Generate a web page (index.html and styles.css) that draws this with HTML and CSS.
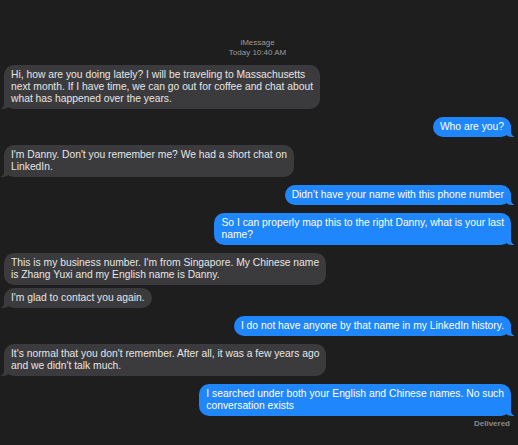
FILE: index.html
```html
<!DOCTYPE html>
<html>
<head>
<meta charset="utf-8">
<link rel="stylesheet" href="styles.css">
</head>
<body>
<div class="chat">
  <div class="meta">
    <div class="svc">iMessage</div>
    <div class="time">Today 10:40 AM</div>
  </div>
  <div class="bubble in tail first">Hi, how are you doing lately? I will be traveling to Massachusetts<br>next month. If I have time, we can go out for coffee and chat about<br>what has happened over the years.</div>
  <div class="bubble out tail">Who are you?</div>
  <div class="bubble in tail">I'm Danny. Don't you remember me? We had a short chat on<br>LinkedIn.</div>
  <div class="bubble out tail">Didn’t have your name with this phone number</div>
  <div class="bubble out tail">So I can properly map this to the right Danny, what is your last<br>name?</div>
  <div class="bubble in">This is my business number. I'm from Singapore. My Chinese name<br>is Zhang Yuxi and my English name is Danny.</div>
  <div class="bubble in tail cont">I'm glad to contact you again.</div>
  <div class="bubble out tail">I do not have anyone by that name in my LinkedIn history.</div>
  <div class="bubble in tail">It's normal that you don't remember. After all, it was a few years ago<br>and we didn't talk much.</div>
  <div class="bubble out tail">I searched under both your English and Chinese names. No such<br>conversation exists</div>
  <div class="status">Delivered</div>
</div>
</body>
</html>
```

FILE: styles.css
```css
html, body {
  margin: 0;
  background: #1e1e1e;
}

body {
  font-family: "Liberation Sans", Arial, sans-serif;
  overflow: hidden;
}

.chat {
  display: flex;
  flex-direction: column;
  padding: 38px 7px 0 4px;
}

.meta {
  text-align: center;
  font-size: 8px;
  line-height: 10px;
  color: #9b9b9b;
  margin-bottom: 7px;
}

.bubble {
  position: relative;
  font-size: 10.3px;
  line-height: 12px;
  padding: 4px 7px;
  border-radius: 10px;
  white-space: nowrap;
  margin-top: 8px;
}

.bubble.first {
  margin-top: 0;
}

.bubble.cont {
  margin-top: 3px;
}

.in {
  align-self: flex-start;
  background: #3b3b3d;
  color: #e6e6e6;
}

.out {
  align-self: flex-end;
  background: #1f86fb;
  color: #ffffff;
}

.in.tail::before,
.in.tail::after,
.out.tail::before,
.out.tail::after {
  content: "";
  position: absolute;
  bottom: 0;
  height: 12px;
  width: 10px;
}

.in.tail::before {
  left: -3px;
  background: #3b3b3d;
  border-bottom-right-radius: 8px 7px;
}

.in.tail::after {
  left: -10px;
  background: #1e1e1e;
  border-bottom-right-radius: 5px;
}

.out.tail::before {
  right: -3px;
  background: #1f86fb;
  border-bottom-left-radius: 8px 7px;
}

.out.tail::after {
  right: -10px;
  background: #1e1e1e;
  border-bottom-left-radius: 5px;
}

.status {
  align-self: flex-end;
  margin-top: 3px;
  padding-right: 1px;
  font-size: 8px;
  line-height: 10px;
  font-weight: bold;
  color: #8a8a8a;
}
```
